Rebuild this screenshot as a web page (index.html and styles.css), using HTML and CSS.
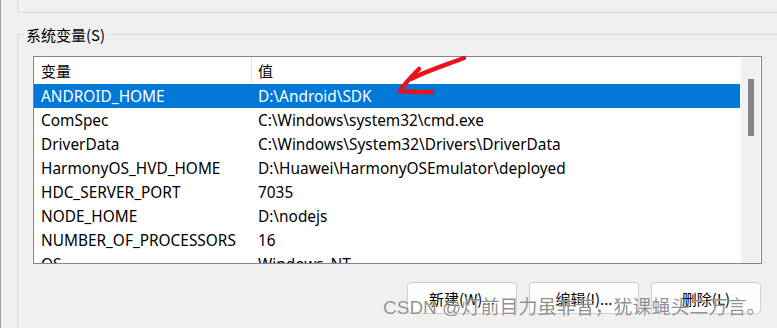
FILE: index.html
```html
<!DOCTYPE html>
<html lang="zh-CN">
<head>
<meta charset="utf-8">
<title>系统变量</title>
<link rel="stylesheet" href="styles.css">
</head>
<body>
<div class="page">
  <div class="top-group"></div>
  <fieldset class="group">
    <legend class="group-title">系统变量(S)</legend>
    <div class="listbox">
      <div class="list-content">
        <div class="row header">
          <div class="cell name">变量</div>
          <div class="cell value">值</div>
        </div>
        <div class="row selected">
          <div class="cell name">ANDROID_HOME</div>
          <div class="cell value">D:\Android\SDK</div>
        </div>
        <div class="row">
          <div class="cell name">ComSpec</div>
          <div class="cell value">C:\Windows\system32\cmd.exe</div>
        </div>
        <div class="row">
          <div class="cell name">DriverData</div>
          <div class="cell value">C:\Windows\System32\Drivers\DriverData</div>
        </div>
        <div class="row">
          <div class="cell name">HarmonyOS_HVD_HOME</div>
          <div class="cell value">D:\Huawei\HarmonyOSEmulator\deployed</div>
        </div>
        <div class="row">
          <div class="cell name">HDC_SERVER_PORT</div>
          <div class="cell value">7035</div>
        </div>
        <div class="row">
          <div class="cell name">NODE_HOME</div>
          <div class="cell value">D:\nodejs</div>
        </div>
        <div class="row">
          <div class="cell name">NUMBER_OF_PROCESSORS</div>
          <div class="cell value">16</div>
        </div>
        <div class="row">
          <div class="cell name">OS</div>
          <div class="cell value">Windows_NT</div>
        </div>
      </div>
      <div class="scrollbar"><div class="thumb"></div></div>
    </div>
    <div class="buttons">
      <button class="btn">新建(W)...</button>
      <button class="btn">编辑(I)...</button>
      <button class="btn">删除(L)</button>
    </div>
  </fieldset>
  <svg class="arrow" width="777" height="328" viewBox="0 0 777 328">
    <path d="M463 58 C 448 64, 428 70, 410 79" />
    <path d="M418 69 C 410 77, 403 84, 399 91 C 410 92, 421 92, 431 92" />
  </svg>
  <div class="watermark">CSDN @灯前目力虽非昔，犹课蝇头二万言。</div>
</div>
</body>
</html>
```

FILE: styles.css
```css
html, body {
  margin: 0;
  padding: 0;
  width: 777px;
  height: 328px;
  overflow: hidden;
  background: #f0f0f0;
}

.page {
  position: relative;
  width: 776px;
  height: 328px;
  border-left: 1px solid #a0a0a0;
  font-family: "Noto Sans", "Noto Sans CJK SC", sans-serif;
  font-size: 15.4px;
  color: #000;
  overflow: hidden;
}

.top-group {
  margin-left: 16px;
  width: 800px;
  height: 12px;
  border-left: 1px solid #dadada;
  border-bottom: 1px solid #dadada;
}

.group {
  margin: 11px 0 0 16px;
  padding: 11px 0 0 0;
  width: 800px;
  height: 400px;
  border: 1px solid #dadada;
  box-sizing: content-box;
}

.group-title {
  margin-left: 6px;
  padding: 0 2px;
  line-height: 21px;
  font-family: "Noto Sans CJK SC", sans-serif;
  font-size: 15px;
}

.listbox {
  display: flex;
  margin-left: 15px;
  width: 727px;
  height: 206px;
  border: 1px solid #828790;
  background: #fff;
}

.list-content {
  flex: 1;
  overflow: hidden;
}

.row {
  display: flex;
  height: 24px;
  line-height: 22px;
  white-space: nowrap;
}

.row .cell {
  padding-top: 2px;
}

.row.header {
  height: 27px;
  line-height: 27px;
  font-family: "Noto Sans CJK SC", sans-serif;
  font-size: 15px;
}

.row.header .cell {
  padding-top: 0;
}

.cell.name {
  width: 211px;
  padding-left: 7px;
  flex: none;
}

.cell.value {
  padding-left: 6px;
}

.row.header .cell.name {
  border-right: 1px solid #e5e5e5;
  width: 210px;
}

.row.selected {
  background: #0078d7;
  color: #fff;
}

.scrollbar {
  flex: none;
  width: 19px;
  margin: 1px 1px 0 1px;
  height: 205px;
  background: #f0f0f0;
  display: flex;
  justify-content: center;
}

.thumb {
  width: 6px;
  height: 57px;
  margin-top: 21px;
  background: #858585;
}

.buttons {
  display: flex;
  justify-content: flex-end;
  gap: 12px;
  width: 728px;
  margin-left: 15px;
  padding-right: 1px;
  margin-top: 18px;
}

.btn {
  width: 110px;
  height: 32px;
  border: 1px solid #d0d0d0;
  border-radius: 4px;
  background: #fdfdfd;
  font-family: "Noto Sans CJK SC", sans-serif;
  font-size: 15px;
  color: #000;
  padding: 0;
}

.arrow {
  position: absolute;
  left: 0;
  top: 0;
  pointer-events: none;
}

.arrow path {
  fill: none;
  stroke: #e8131b;
  stroke-width: 4.5;
  stroke-linecap: round;
  stroke-linejoin: round;
}

.watermark {
  position: absolute;
  left: 382px;
  top: 298px;
  font-family: "Liberation Sans", "Noto Sans CJK SC", sans-serif;
  font-size: 19px;
  line-height: 19px;
  color: rgba(125, 125, 125, 0.85);
  text-shadow: 0 0 1px #fff;
  white-space: nowrap;
}
```
